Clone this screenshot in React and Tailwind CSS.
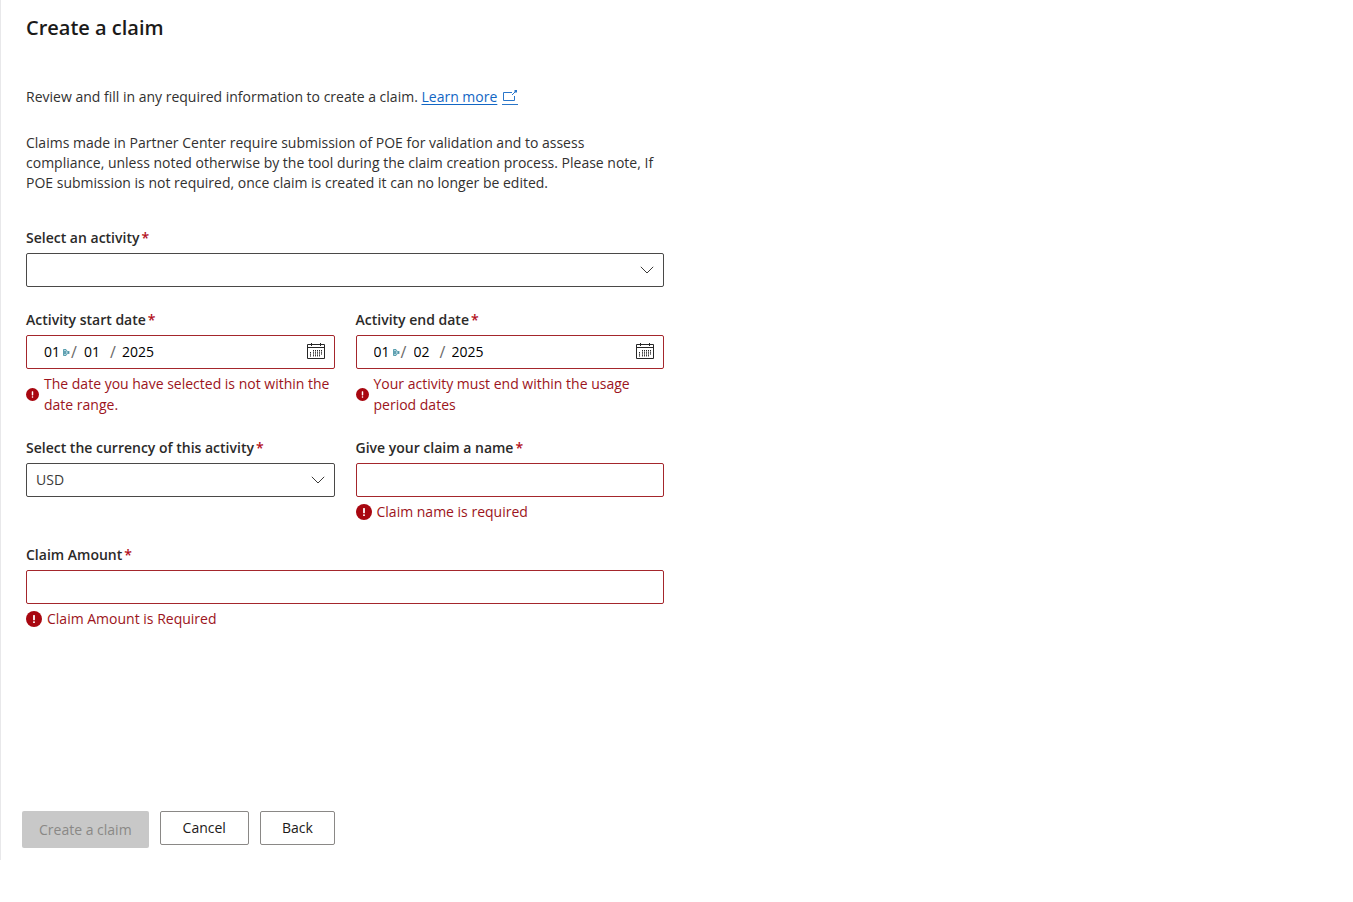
import React from "react";

function FieldLabel({ htmlFor, children }) {
  return (
    <label htmlFor={htmlFor} className="mb-[5px] flex gap-0.5 text-sm/5 font-semibold whitespace-nowrap text-[#2b2a29]">
      {children}
      <span className="text-[#b3101c]" aria-hidden="true">*</span>
    </label>
  );
}

function ErrorIcon({ className }) {
  return (
    <svg viewBox="0 0 16 16" className={className} aria-hidden="true">
      <circle cx="8" cy="8" r="8" fill="#a80710" />
      <rect x="7.1" y="4" width="1.8" height="5.2" rx="0.5" fill="#fff" />
      <rect x="7.1" y="10.3" width="1.8" height="1.8" rx="0.6" fill="#fff" />
    </svg>
  );
}

function FieldError({ id, children }) {
  return (
    <p id={id} className="mt-[5px] flex items-center gap-[5px] text-sm/5 text-[#9c1420]">
      <ErrorIcon className="size-4 shrink-0" />
      {children}
    </p>
  );
}

function DateError({ id, children }) {
  return (
    <p id={id} className="mt-1 flex items-center gap-[5px] text-sm/[21px] text-[#9c1420]">
      <ErrorIcon className="size-[13px] shrink-0" />
      <span>{children}</span>
    </p>
  );
}

function SelectField({ id, label, options }) {
  return (
    <div className="flex flex-col">
      <FieldLabel htmlFor={id}>{label}</FieldLabel>
      <div className="grid items-center">
        <select
          id={id}
          className="col-start-1 row-start-1 h-[34px] w-full appearance-none rounded-xs border border-[#4a4948] bg-white px-[9px] text-sm text-[#3b3a39]"
        >
          {options.map((option) => (
            <option key={option}>{option}</option>
          ))}
        </select>
        <svg
          viewBox="0 0 14 8"
          className="pointer-events-none col-start-1 row-start-1 mr-[10px] h-2 w-3.5 justify-self-end"
          fill="none"
          stroke="#3b3a39"
          aria-hidden="true"
        >
          <path d="M.8.8 7 7 13.2.8" />
        </svg>
      </div>
    </div>
  );
}

function TextField({ id, label, error }) {
  return (
    <div className="flex flex-col">
      <FieldLabel htmlFor={id}>{label}</FieldLabel>
      <input
        id={id}
        type="text"
        aria-invalid="true"
        aria-describedby={`${id}-error`}
        className="h-[34px] w-full rounded-xs border border-[#a4262c] bg-white px-[9px] text-sm"
      />
      <FieldError id={`${id}-error`}>{error}</FieldError>
    </div>
  );
}

function CalendarIcon() {
  return (
    <svg viewBox="0 0 18 18" className="size-[18px]" fill="none" stroke="#262626" aria-hidden="true">
      <path d="M.5 1.500h17v14H.5zM.5 4.500h17M4.500 0v3M13.500 0v3" />
      <path
        d="M6.500 7v7M8.500 7v7M10.500 7v7M12.500 7v7M14.500 7v5M3.500 9v5"
        strokeDasharray="1.500 0.700"
      />
    </svg>
  );
}

function DateField({ id, label, month, day, year, error }) {
  return (
    <div className="flex flex-col">
      <FieldLabel htmlFor={id}>{label}</FieldLabel>
      <div className="flex h-[34px] items-center rounded-xs border border-[#a4262c] bg-white pr-[9px] pl-[17px] text-sm text-black">
        <input id={id} defaultValue={month} aria-invalid="true" aria-describedby={`${id}-error`} className="w-[18px]" />
        <svg viewBox="0 0 9 7" className="h-[7px] w-[9px]" aria-hidden="true">
          <path d="M1.500 .5h2.500l2 3-2 3H1.500z" fill="#a9d3dc" stroke="#3f8ea0" strokeWidth="0.800" />
          <path d="M3 2v3M6.800 2v3" stroke="#1f6f8a" />
        </svg>
        <span className="w-[13px] text-base text-[#6b6a69]">/</span>
        <input defaultValue={day} aria-label={`${label} day`} className="w-[26px]" />
        <span className="w-3 text-base text-[#6b6a69]">/</span>
        <input defaultValue={year} aria-label={`${label} year`} className="w-10" />
        <button type="button" aria-label={`Open calendar for ${label}`} className="ml-auto">
          <CalendarIcon />
        </button>
      </div>
      <DateError id={`${id}-error`}>{error}</DateError>
    </div>
  );
}

export default function App() {
  return (
    <main className="border-l border-[#e8e8ea] pt-3.5 pr-4 pb-3 pl-[25px] font-['Open_Sans','Noto_Sans',sans-serif] text-sm text-[#323130]">
      <h1 className="text-xl/7 font-semibold text-[#1b1a19]">Create a claim</h1>
      <form className="max-w-[638px]" onSubmit={(event) => event.preventDefault()}>
        <p className="mt-[45px] leading-5">
          Review and fill in any required information to create a claim.{" "}
          <a href="#learn-more" className="text-[#1266c4]">
            <span className="underline underline-offset-2">Learn more</span>
            <svg viewBox="0 0 16 16" className="ml-[5px] inline-block size-4" fill="none" stroke="#2a76c9" aria-hidden="true">
              <path d="M10 2.500H1.500v8h11V6" />
              <path d="M10 5l3.500-3.500" />
              <path d="M12.500 0h2.500v2.500h-2.500z" fill="#2a76c9" stroke="none" />
              <path d="M0 14.500h16" />
            </svg>
          </a>
        </p>
        <p className="mt-[26px] leading-5">
          Claims made in Partner Center require submission of POE for validation and to assess compliance, unless noted
          otherwise by the tool during the claim creation process. Please note, If POE submission is not required, once
          claim is created it can no longer be edited.
        </p>

        <div className="mt-[35px]">
          <SelectField id="activity" label="Select an activity" options={[""]} />
        </div>

        <div className="mt-[23px] grid grid-cols-2 gap-x-[21px] gap-y-[23px]">
          <DateField
            id="start-date"
            label="Activity start date"
            month="01"
            day="01"
            year="2025"
            error="The date you have selected is not within the date range."
          />
          <DateField
            id="end-date"
            label="Activity end date"
            month="01"
            day="02"
            year="2025"
            error="Your activity must end within the usage period dates"
          />
          <SelectField id="currency" label="Select the currency of this activity" options={["USD"]} />
          <TextField id="claim-name" label="Give your claim a name" error="Claim name is required" />
        </div>

        <div className="mt-[23px]">
          <TextField id="claim-amount" label="Claim Amount" error="Claim Amount is Required" />
        </div>

        <div className="mt-[182px] -ml-1 flex items-start gap-[11px]">
          <button type="submit" disabled className="h-[37px] rounded-xs bg-[#c8c8c8] px-[17px] text-[#8a8886]">
            Create a claim
          </button>
          <button type="button" className="h-[34px] rounded-xs border border-[#8a8886] bg-white px-[22px] text-[#1b1a19]">
            Cancel
          </button>
          <button type="button" className="h-[34px] rounded-xs border border-[#8a8886] bg-white px-[21px] text-[#1b1a19]">
            Back
          </button>
        </div>
      </form>
    </main>
  );
}
